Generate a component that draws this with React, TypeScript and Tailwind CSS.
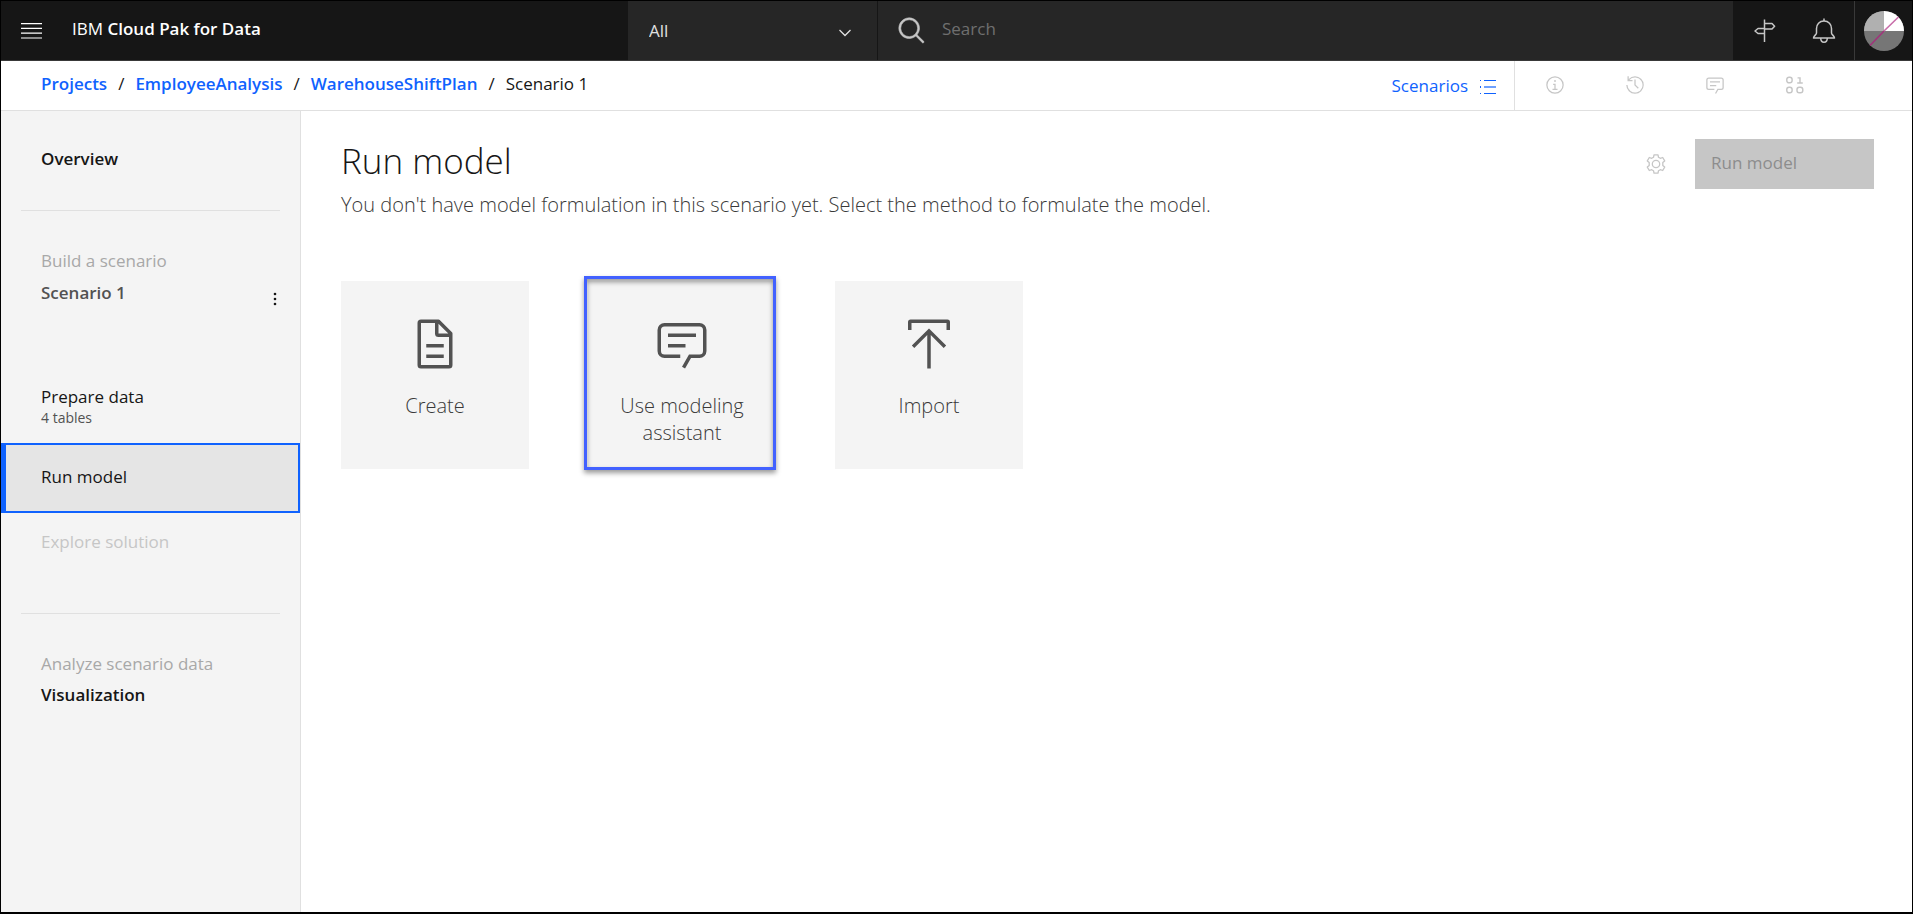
import type { ReactNode } from 'react';

type IconProps = { className?: string };

function Glyph({ className, children, box = '0 0 32 32' }: IconProps & { children: ReactNode; box?: string }) {
  return (
    <svg viewBox={box} className={className} fill="currentColor" aria-hidden="true">
      {children}
    </svg>
  );
}

const MenuIcon = ({ className }: IconProps) => (
  <Glyph className={className} box="0 0 22 16">
    <path d="M0 0h21v1.200H0zM0 4.800h21v1.200H0zM0 9.600h21v1.200H0zM0 14.400h21v1.200H0z" />
  </Glyph>
);

const DocumentIcon = ({ className }: IconProps) => (
  <Glyph className={className}>
    <path d="M25.7,9.3l-7-7A.91.91,0,0,0,18,2H8A2,2,0,0,0,6,4V28a2,2,0,0,0,2,2H24a2,2,0,0,0,2-2V10A.91.91,0,0,0,25.7,9.3ZM18,4.4,23.6,10H18ZM24,28H8V4h8v6a2,2,0,0,0,2,2h6Z" />
    <path d="M11 16h10v2H11zM11 22h10v2H11z" />
  </Glyph>
);

const ChatIcon = ({ className }: IconProps) => (
  <Glyph className={className}>
    <path d="M17.74,30,16,29l4-7h6a2,2,0,0,0,2-2V8a2,2,0,0,0-2-2H6A2,2,0,0,0,4,8V20a2,2,0,0,0,2,2h9v2H6a4,4,0,0,1-4-4V8A4,4,0,0,1,6,4H26a4,4,0,0,1,4,4V20a4,4,0,0,1-4,4H21.16Z" />
    <path d="M8 10h16v2H8zM8 16h10v2H8z" />
  </Glyph>
);

const ImportIcon = ({ className }: IconProps) => (
  <Glyph className={className}>
    <path d="M6 8V4H26V8h2V3.5A1.5 1.5 0 0 0 26.500 2h-21A1.5 1.500 0 0 0 4 3.500V8z" />
    <path d="M6.200 16.900 7.600 18.300 15 10.800V30h2V10.800L24.400 18.300 25.800 16.900 16 7.200z" />
  </Glyph>
);

const SearchIcon = ({ className }: IconProps) => (
  <Glyph className={className}>
    <path d="M29,27.586l-7.552-7.552a11.018,11.018,0,1,0-1.414,1.414L27.586,29ZM4,13a9,9,0,1,1,9,9A9.010,9.010,0,0,1,4,13Z" stroke="currentColor" strokeWidth="0.600" />
  </Glyph>
);

const ChevronIcon = ({ className }: IconProps) => (
  <svg viewBox="0 0 12 8" className={className} fill="none" stroke="currentColor" aria-hidden="true">
    <path d="M0.500 1 6 6.500 11.500 1" strokeWidth="1.300" />
  </svg>
);

const SignpostIcon = ({ className }: IconProps) => (
  <svg viewBox="0 0 22 24" className={className} fill="none" stroke="currentColor" strokeWidth="1.500" aria-hidden="true">
    <path d="M10.500 0.500V23" />
    <path d="M10.500 4.500h7.500l2.600 2.700L18 10h-7.500M10.500 9.500H4L1 12l3 2.500h6.500" strokeLinejoin="round" />
  </svg>
);

const BellIcon = ({ className }: IconProps) => (
  <svg viewBox="0 0 24 26" className={className} fill="none" stroke="currentColor" strokeWidth="1.500" aria-hidden="true">
    <path d="M12 0.500V3" />
    <path d="M12 3c-4.600 0-7.500 3.300-7.500 7.500V15c0 1.700-2.700 2.600-3 5h21c-.3-2.400-3-3.300-3-5v-4.500C19.500 6.300 16.600 3 12 3z" strokeLinejoin="round" />
    <path d="M8.700 20c0 2.600 1.400 4.200 3.300 4.200s3.300-1.600 3.300-4.200" />
  </svg>
);

const Avatar = ({ className }: IconProps) => (
  <svg viewBox="0 0 40 40" className={className} aria-hidden="true">
    <circle cx="20" cy="20" r="20" fill="#767676" />
    <path d="M0 20A20 20 0 0 1 20 0V20z" fill="#b0b0b0" />
    <path d="M20 0A20 20 0 0 1 40 20H20z" fill="#ffffff" />
    <path d="M6 34.500 20 20" stroke="#a1337b" strokeWidth="1.600" />
    <path d="M20 20 34.500 6" stroke="#c86da9" strokeWidth="1.600" />
  </svg>
);

const ListIcon = ({ className }: IconProps) => (
  <Glyph className={className} box="0 0 16 14">
    <path d="M0 0h1v1H0zM0 6h1v2H0zM0 13h1v1H0zM4 0h12v1H4zM4 13h12v1H4z" />
    <path d="M4 6h12v2H4z" opacity="0.600" />
  </Glyph>
);

const InfoIcon = ({ className }: IconProps) => (
  <Glyph className={className}>
    <path d="M17 22V14h-4v2h2v6h-3v2h8V22zM16 8a1.500 1.500 0 1 0 1.500 1.500A1.500 1.500 0 0 0 16 8z" />
    <path d="M16 30A14 14 0 1 1 30 16 14 14 0 0 1 16 30zM16 4A12 12 0 1 0 28 16 12 12 0 0 0 16 4z" />
  </Glyph>
);

const HistoryIcon = ({ className }: IconProps) => (
  <Glyph className={className}>
    <path d="M20.590 22 15 16.410V7h2v8.580l5 5.010z" />
    <path d="M16 2A13.940 13.940 0 0 0 6 6.230V2H4v8h8V8H7.080A12 12 0 1 1 4 16H2A14 14 0 1 0 16 2z" />
  </Glyph>
);

const DataIcon = ({ className }: IconProps) => (
  <svg viewBox="0 0 18 18" className={className} fill="none" stroke="currentColor" strokeWidth="1.300" aria-hidden="true">
    <rect x="1.600" y="2" width="4.800" height="5" rx="2" />
    <rect x="1.600" y="11" width="4.800" height="5" rx="2" />
    <rect x="10.800" y="11" width="5.200" height="5" rx="2" />
    <path d="M11.300 2.600h2.200V7M11 7.200h5" />
  </svg>
);

const GearIcon = ({ className }: IconProps) => (
  <svg viewBox="0 0 20 20" className={className} fill="none" stroke="currentColor" strokeWidth="1.300" aria-hidden="true">
    <path
      d="M8 0.800h4l.5 2.500 1.800 1 2.400-.8 2 3.400-1.900 1.700v2.800l1.900 1.700-2 3.400-2.400-.8-1.800 1-.5 2.500H8l-.5-2.500-1.800-1-2.400.8-2-3.400 1.900-1.700V8.600L1.300 6.900l2-3.400 2.400.8 1.800-1z"
      strokeLinejoin="round"
    />
    <circle cx="10" cy="10" r="3.700" />
  </svg>
);

const DotsIcon = ({ className }: IconProps) => (
  <Glyph className={className} box="0 0 4 14">
    <circle cx="2" cy="2" r="1.300" />
    <circle cx="2" cy="7" r="1.300" />
    <circle cx="2" cy="12" r="1.300" />
  </Glyph>
);

const crumbs = ['Projects', 'EmployeeAnalysis', 'WarehouseShiftPlan'];

const tools = [
  { label: 'Information', Icon: InfoIcon },
  { label: 'History', Icon: HistoryIcon },
  { label: 'Comments', Icon: ChatIcon },
  { label: 'Data', Icon: DataIcon },
];

const methods = [
  { label: 'Create', Icon: DocumentIcon, highlighted: false },
  { label: 'Use modeling assistant', Icon: ChatIcon, highlighted: true },
  { label: 'Import', Icon: ImportIcon, highlighted: false },
];

function Header() {
  return (
    <header className="flex h-[60px] shrink-0 border-b border-[#393939] bg-[#161616] text-[17px]">
      <div className="flex max-w-[627px] flex-1 basis-[627px] items-center">
        <button type="button" aria-label="Menu" className="flex h-full w-[62px] items-center pl-5 text-white">
          <MenuIcon className="h-4 w-[22px]" />
        </button>
        <h1 className="pb-1 pl-[9px] text-white">
          IBM <strong className="font-semibold">Cloud Pak for Data</strong>
        </h1>
      </div>
      <div className="relative w-[250px] border-r border-[#161616] bg-[#262626]">
        <select aria-label="Search scope" className="h-full w-full appearance-none bg-transparent pl-[21px] text-[#e0e0e0]">
          <option>All</option>
        </select>
        <ChevronIcon className="pointer-events-none absolute top-7 right-[26px] h-2 w-3 text-[#e0e0e0]" />
      </div>
      <label className="flex flex-1 items-center bg-[#262626] pl-[19px]">
        <SearchIcon className="h-[30px] w-[30px] shrink-0 text-[#c6c6c6]" />
        <input
          type="search"
          aria-label="Search"
          placeholder="Search"
          className="ml-[15px] min-w-0 flex-1 bg-transparent pb-1 text-[#c6c6c6] outline-none placeholder:text-[#6f6f6f]"
        />
      </label>
      <div className="flex text-[#c6c6c6]">
        <button type="button" aria-label="Tour" className="flex w-[61px] items-center justify-center pl-0.5">
          <SignpostIcon className="h-6 w-[22px]" />
        </button>
        <button type="button" aria-label="Notifications" className="flex w-[60px] items-center justify-center">
          <BellIcon className="h-[26px] w-6" />
        </button>
        <button type="button" aria-label="Profile" className="flex w-[58px] items-center justify-center border-l border-[#393939]">
          <Avatar className="h-10 w-10" />
        </button>
      </div>
    </header>
  );
}

function Toolbar() {
  return (
    <div className="flex h-[50px] shrink-0 items-stretch border-b border-[#e0e0e0] text-[17px]">
      <nav aria-label="Breadcrumb" className="flex flex-1 items-center pb-1 pl-10">
        <ol className="flex text-[#161616]">
          {crumbs.map((crumb) => (
            <li key={crumb} className="flex">
              <a href="#" className="font-semibold text-[#0f62fe]">
                {crumb}
              </a>
              <span className="px-[11px]">/</span>
            </li>
          ))}
          <li>Scenario 1</li>
        </ol>
      </nav>
      <button type="button" className="flex items-center gap-3 border-r border-[#e0e0e0] pr-[18px] text-[#0f62fe]">
        Scenarios
        <ListIcon className="mt-0.5 h-3.5 w-4" />
      </button>
      <div className="flex pr-[77px] pb-0.5 text-[#c6c6c6]">
        {tools.map(({ label, Icon }) => (
          <button key={label} type="button" aria-label={label} className="flex w-20 items-center justify-center">
            <Icon className="h-5 w-5" />
          </button>
        ))}
      </div>
    </div>
  );
}

function Sidebar() {
  return (
    <nav aria-label="Scenario" className="w-[300px] shrink-0 border-r border-[#e0e0e0] bg-[#f4f4f4] text-[17px] leading-6">
      <a href="#" className="mt-9 ml-10 block font-semibold text-[#161616]">
        Overview
      </a>
      <hr className="mx-5 mt-[39px] border-[#e0e0e0]" />
      <p className="mt-[38px] ml-10 text-[#a8a8a8]">Build a scenario</p>
      <div className="mt-[7px] flex items-center justify-between pr-[23px] pl-10">
        <h2 className="font-semibold text-[#525252]">Scenario 1</h2>
        <button type="button" aria-label="Scenario options" className="pt-3 text-[#161616]">
          <DotsIcon className="h-3.5 w-1" />
        </button>
      </div>
      <a href="#" className="mt-[79px] ml-10 block text-[#161616]">
        Prepare data
        <span className="block text-sm leading-[18px] text-[#525252]">4 tables</span>
      </a>
      <a
        href="#"
        aria-current="page"
        className="mt-4 flex h-[70px] items-center border-2 border-l-[5px] border-[#0f62fe] bg-[#e5e5e5] pb-0.5 pl-[35px] text-[#161616]"
      >
        Run model
      </a>
      <a href="#" aria-disabled="true" className="mt-[17px] ml-10 block text-[#c6c6c6]">
        Explore solution
      </a>
      <hr className="mx-5 mt-[59px] border-[#e0e0e0]" />
      <p className="mt-[38px] ml-10 text-[#a8a8a8]">Analyze scenario data</p>
      <a href="#" className="mt-[7px] ml-10 block font-semibold text-[#161616]">
        Visualization
      </a>
    </nav>
  );
}

export default function App() {
  return (
    <div className="flex min-h-screen flex-col border border-b-2 border-black bg-white font-['Open_Sans',sans-serif] font-normal">
      <Header />
      <Toolbar />
      <div className="flex flex-1">
        <Sidebar />
        <main className="flex-1 pr-[38px] pl-10">
          <div className="flex items-start justify-between pt-7">
            <div>
              <h2 className="text-[35px] leading-11 font-light text-[#161616]">Run model</h2>
              <p className="mt-2 text-xl leading-7 font-light text-[#393939]">
                You don't have model formulation in this scenario yet. Select the method to formulate the model.
              </p>
            </div>
            <div className="flex items-center gap-[29px]">
              <button type="button" aria-label="Settings" className="text-[#c6c6c6]">
                <GearIcon className="h-5 w-5" />
              </button>
              <button
                type="button"
                disabled
                className="h-[50px] w-[179px] bg-[#c6c6c6] pb-0.5 pl-4 text-left text-[17px] text-[#8d8d8d]"
              >
                Run model
              </button>
            </div>
          </div>
          <div className="mt-[62px] flex gap-[59px]">
            {methods.map(({ label, Icon, highlighted }) => (
              <button
                key={label}
                type="button"
                className="relative flex h-[188px] w-[188px] flex-col items-center bg-[#f4f4f4] px-7 pt-[35px] text-[#525252]"
              >
                <Icon className="h-14 w-14" />
                <span className="mt-5 text-xl leading-[27px] font-light text-[#393939]">{label}</span>
                {highlighted && (
                  <span className="pointer-events-none absolute -top-[5px] right-0 -bottom-px -left-1 border-3 border-[#4261ff] shadow-[0_3px_5px_rgba(0,0,0,0.4),inset_0_3px_5px_rgba(0,0,0,0.4)]" />
                )}
              </button>
            ))}
          </div>
        </main>
      </div>
    </div>
  );
}
